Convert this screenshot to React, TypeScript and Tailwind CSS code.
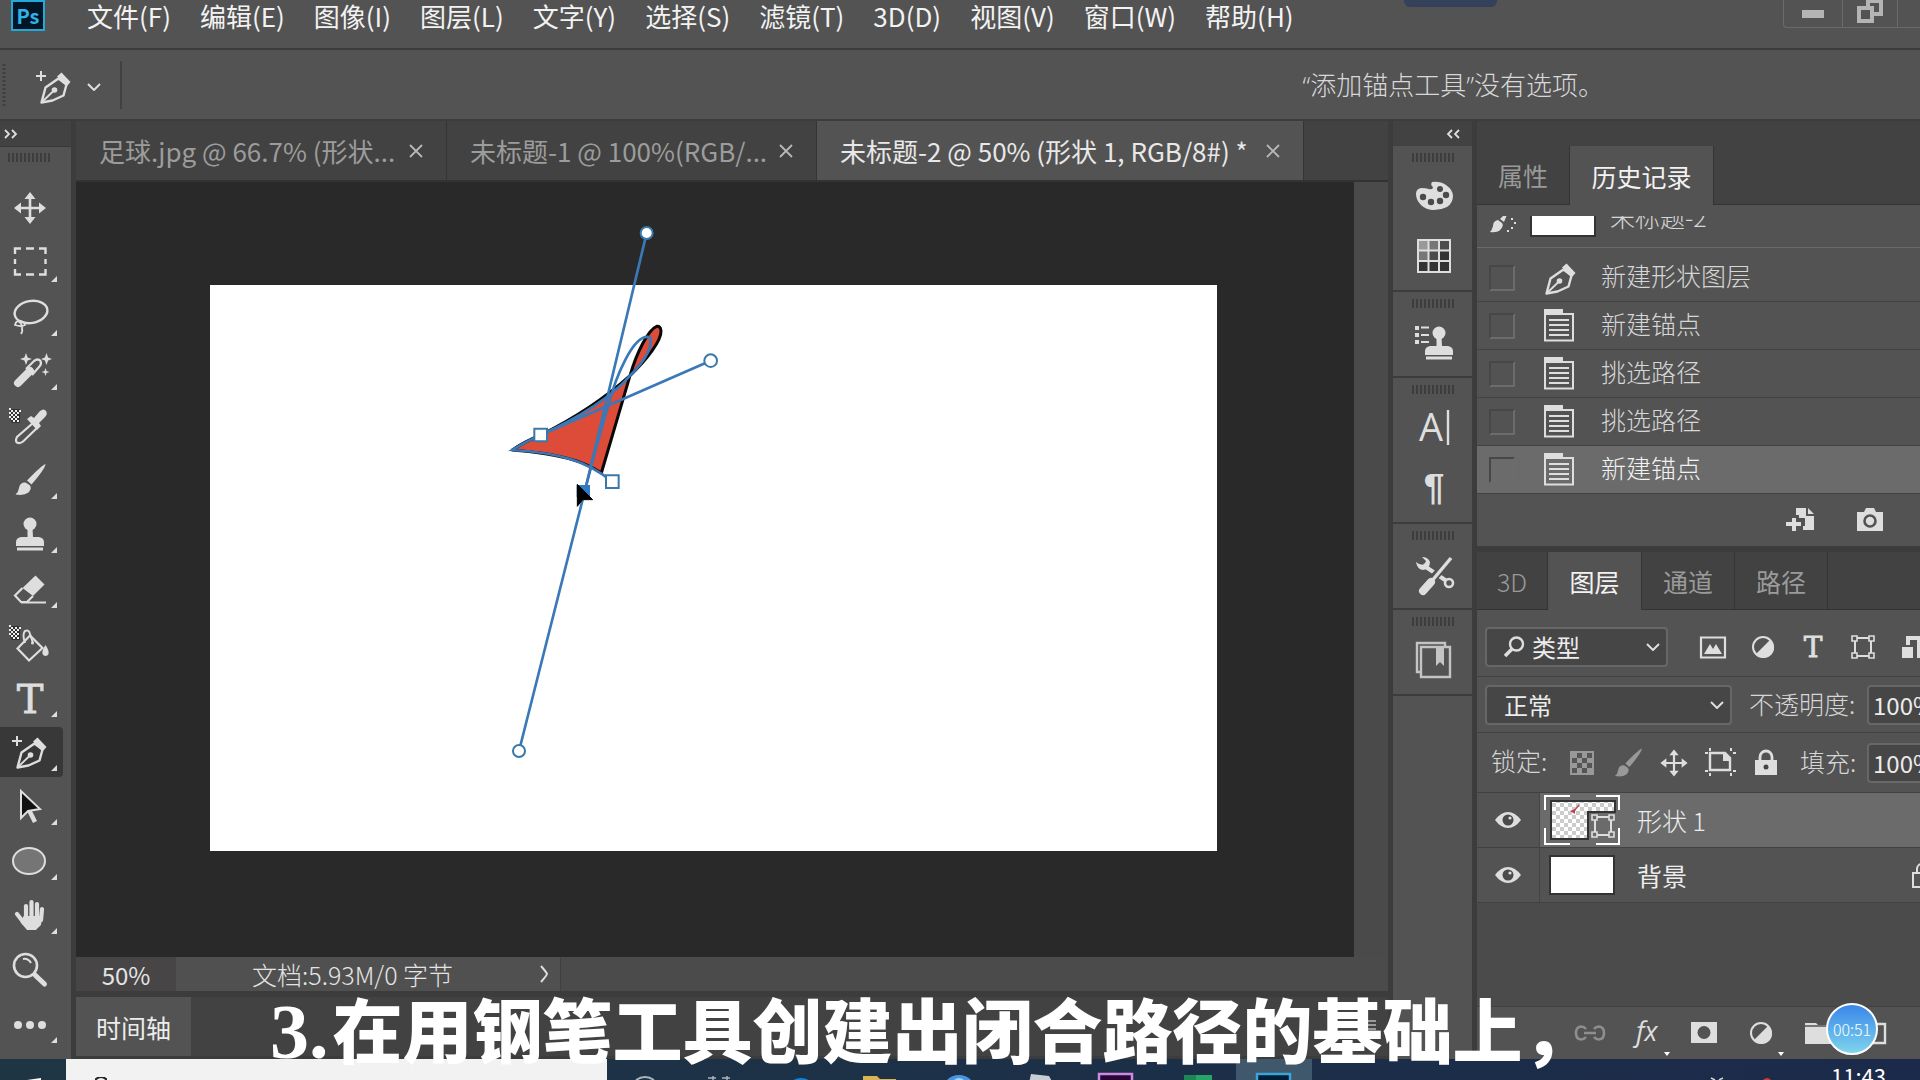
import type { ReactNode } from 'react';

const MENUS = ['文件(F)', '编辑(E)', '图像(I)', '图层(L)', '文字(Y)', '选择(S)', '滤镜(T)', '3D(D)', '视图(V)', '窗口(W)', '帮助(H)'];

const LIGHT = '#dedede';

function Chevron() {
    return (
        <svg viewBox="0 0 14 8" className="w-3.5 h-2" fill="none" stroke={LIGHT} strokeWidth="2">
            <path d="M1 1l6 6 6-6" />
        </svg>
    );
}

function Grip() {
    return (
        <svg viewBox="0 0 42 9" className="w-[42px] h-[9px] shrink-0" stroke="#3d3d3d" strokeWidth="2">
            <path d="M1 0v9M5 0v9M9 0v9M13 0v9M17 0v9M21 0v9M25 0v9M29 0v9M33 0v9M37 0v9M41 0v9" />
        </svg>
    );
}

function DoubleChevron({ flip }: { flip?: boolean }) {
    return (
        <svg viewBox="0 0 14 10" className={flip ? 'w-3.5 h-2.5 rotate-180' : 'w-3.5 h-2.5'} fill="none" stroke={LIGHT} strokeWidth="1.8">
            <path d="M1 1l4 4-4 4M8 1l4 4-4 4" />
        </svg>
    );
}

// All drawings below are centred on 0,0

function Nib() {
    return (
        <g>
            <path d="M-12.5 15.5L-8.5 .5 4.5-8.5 12.5-2.5 9.5 8.5-1.5 13.5Z" fill="none" stroke={LIGHT} strokeWidth="2.4" strokeLinejoin="round" />
            <path d="M3-10.5L7.5-14.5 16.5-5 12.5-.5Z" fill={LIGHT} />
            <circle cx=".5" cy="3" r="2.8" fill={LIGHT} />
            <path d="M.5 3L-12 15" stroke={LIGHT} strokeWidth="1.8" />
        </g>
    );
}

function PenPlus() {
    return (
        <g>
            <path d="M-13-16v10M-18-11h10" stroke={LIGHT} strokeWidth="2" />
            <Nib />
        </g>
    );
}

function MoveCross() {
    return (
        <g fill={LIGHT}>
            <path d="M0-10V10M-10 0H10" stroke={LIGHT} strokeWidth="2.6" />
            <path d="M0-16l5.5 7h-11ZM0 16l5.5-7h-11ZM-16 0l7-5.5v11ZM16 0l-7-5.5v11Z" />
        </g>
    );
}

function Stamp() {
    return (
        <g fill={LIGHT}>
            <circle cx="0" cy="-10" r="6.5" />
            <path d="M-2.5-6h5l.5 9h6q5 1 5 5v4h-28v-4q0-4 5-5h6.5Z" />
            <path d="M-13 13.5h26v3h-26Z" />
        </g>
    );
}

function BrushShape({ color = LIGHT }: { color?: string }) {
    return (
        <g fill={color}>
            <path d="M15.5-16Q12-15-3 .5L1.5 4.5Q15-11 15.5-16Z" />
            <path d="M-4.5 2.5Q-10 2-11 8-11.5 12-14.5 14.5-6 16-1.5 12.5 2.5 8-.5 5Z" />
        </g>
    );
}

function Checker() {
    return (
        <g stroke="none">
            <path d="M-20-17h10v14h-8l-2-4Z" fill="#333" />
            <path d="M-19-16h2v2h-2zM-15-16h2v2h-2zM-17-14h2v2h-2zM-13-14h2v2h-2zM-19-12h2v2h-2zM-15-12h2v2h-2zM-17-10h2v2h-2zM-13-10h2v2h-2zM-19-8h2v2h-2zM-15-8h2v2h-2zM-17-6h2v2h-2zM-13-6h2v2h-2zM-21-14h2v2h-2zM-21-10h2v2h-2zM-21-18h2v2h-2zM-11-16h2v2h-2z" fill="#eee" />
        </g>
    );
}

function Bounds() {
    return (
        <g fill="none" stroke={LIGHT} strokeWidth="2">
            <path d="M-8-6V6M8-6V6M-6-9H6M-6 9H6" />
            <path d="M-11-11h5v5h-5ZM6-11h5v5h-5ZM-11 6h5v5h-5ZM6 6h5v5h-5Z" strokeWidth="1.6" />
        </g>
    );
}

function HalfCircle() {
    return (
        <g>
            <circle r="10" fill="none" stroke={LIGHT} strokeWidth="2" />
            <path d="M7-7A10 10 0 1 1-7 7Z" fill={LIGHT} />
        </g>
    );
}

function SlabT({ size }: { size: number }) {
    return (
        <text x="0" y={size * 0.37} fontSize={size} textAnchor="middle" fill={LIGHT} stroke={LIGHT} strokeWidth=".8" fontFamily="DejaVu Serif, serif">T</text>
    );
}

const TOOLS: { name: string; art: ReactNode; more?: boolean; active?: boolean }[] = [
    { name: '移动工具', art: <MoveCross /> },
    {
        name: '矩形选框工具',
        more: true,
        art: <path d="M-15-9v-5.500h6M-4-14.5h8M9-14.5h6.500V-9M15.500-4v5M15.500 6v5.500H9M4 11.500h-8M-9 11.500h-6V6M-15 1v-5" fill="none" stroke={LIGHT} strokeWidth="2.4" />,
    },
    {
        name: '套索工具',
        more: true,
        art: (
            <g fill="none" stroke={LIGHT} strokeWidth="2.4">
                <ellipse cx="1" cy="-5" rx="16.5" ry="11" transform="rotate(-10 1 -5)" />
                <path d="M-15 8q1-5 6-4 4 1 4 4-4 2-10 0ZM-12 4q5 3 4 8 1 2-1 5" strokeWidth="1.8" />
            </g>
        ),
    },
    {
        name: '魔棒工具',
        more: true,
        art: (
            <g fill={LIGHT}>
                <path d="M-12 12L0 0" stroke={LIGHT} strokeWidth="8" strokeLinecap="round" />
                <path d="M-4-2L4-10Q8-13 10.5-10 12-7 9-4L2 4" fill="none" stroke={LIGHT} strokeWidth="2.2" />
                <path d="M-4-18l1.6 4.4L2-12-2.400-10.400-4-6-5.600-10.400-10-12-5.600-13.600ZM16.500-18l1.600 4.400L22-12l-3.900 1.600L16.500-6l-1.600-4.400L11-12l3.900-1.600ZM15.500-3l1 3 3 1-3 1-1 3-1-3-3-1 3-1Z" />
            </g>
        ),
    },
    {
        name: '吸管工具',
        art: (
            <g>
                <Checker />
                <path d="M3-3L-13 11q-2 4 0 5.500 3 1.500 6-1L7 2" fill="none" stroke={LIGHT} strokeWidth="2.2" />
                <path d="M-3-7l4-3 3 2 6-7q4-3 6 0 2 3-1 6l-6 6 2 3-4 4Z" fill={LIGHT} />
            </g>
        ),
    },
    { name: '画笔工具', more: true, art: <BrushShape /> },
    { name: '仿制图章工具', more: true, art: <Stamp /> },
    {
        name: '橡皮擦工具',
        more: true,
        art: (
            <g>
                <path d="M5.5-13.5L14.5-4.5 3 7-7.5-1Z" fill={LIGHT} />
                <path d="M-7.5-1L-15 6.5-9 13H-3L3 7M-9 13.5H16" fill="none" stroke={LIGHT} strokeWidth="2.2" />
            </g>
        ),
    },
    {
        name: '油漆桶工具',
        art: (
            <g fill="none" stroke={LIGHT} strokeWidth="2.2">
                <Checker />
                <path d="M0-7.5L12.5 5-1 17.5-12.5 5.5Z" />
                <path d="M-5 0q-3-9 0-12 4-2 5 3l3 9" strokeWidth="2" />
                <circle cx="2.5" cy="0" r="1.5" fill={LIGHT} stroke="none" />
                <path d="M15.5 2q4 6 3 9-1 2-3 2t-3-2q-1-3 3-9Z" fill={LIGHT} stroke="none" />
            </g>
        ),
    },
    { name: '横排文字工具', more: true, art: <SlabT size={40} /> },
    { name: '添加锚点工具', more: true, active: true, art: <PenPlus /> },
    {
        name: '路径选择工具',
        more: true,
        art: (
            <g stroke={LIGHT}>
                <path d="M-1 4L5 16" strokeWidth="4.5" />
                <path d="M-9-15V12L-2 5l12-2Z" fill="#111" strokeWidth="2" />
            </g>
        ),
    },
    { name: '椭圆工具', more: true, art: <ellipse cx="-1" cy="0" rx="16" ry="13" fill="#757575" stroke={LIGHT} strokeWidth="2" /> },
    {
        name: '抓手工具',
        more: true,
        art: (
            <g stroke={LIGHT} strokeWidth="4.2" strokeLinecap="round" fill={LIGHT}>
                <path d="M-4-9V4M1.5-13V4M7-11V4M12-6L11 5M-13-1L-6 8" />
                <path d="M-5 3H10L9 9 5 13H-2L-7 7Z" />
            </g>
        ),
    },
    {
        name: '缩放工具',
        art: (
            <g fill="none" stroke={LIGHT}>
                <circle cx="-4.5" cy="-3.5" r="11.5" strokeWidth="2.6" />
                <path d="M-7-10q5-1 8 4" strokeWidth="2" />
                <path d="M5 6L14.5 15" strokeWidth="5" strokeLinecap="round" />
            </g>
        ),
    },
    {
        name: '编辑工具栏',
        more: true,
        art: (
            <g fill={LIGHT}>
                <circle cx="-12" cy="1" r="4" />
                <circle cx="0" cy="1" r="4" />
                <circle cx="12" cy="1" r="4" />
            </g>
        ),
    },
];

function ToolBar() {
    return (
        <aside className="w-[71px] shrink-0 flex flex-col">
            <div className="h-[25px] shrink-0 bg-[#424242] flex items-center px-1">
                <DoubleChevron />
            </div>
            <div className="flex-1 flex flex-col bg-[#535353] pb-2 border-t border-[#383838]">
                <div className="h-[34px] shrink-0 px-2 pt-1.5">
                    <Grip />
                </div>
                {TOOLS.map((tool) => (
                    <button key={tool.name} type="button" aria-label={tool.name} className="flex-1 min-h-0 w-[63px] flex items-center">
                        <span className={`w-[63px] h-[50px] flex items-center ${tool.active ? 'rounded-r-sm bg-[#383838]' : ''}`}>
                            <svg viewBox="-30 -25 60 50" className="w-[60px] h-[50px]">
                                {tool.art}
                                {tool.more && <path d="M27 13V19H21Z" fill={LIGHT} />}
                            </svg>
                        </span>
                    </button>
                ))}
            </div>
        </aside>
    );
}

function DocTab({ title, size, active }: { title: string; size: string; active?: boolean }) {
    return (
        <div className={`${size} shrink-0 h-[59px] pl-[23px] pr-[23px] flex items-center justify-between border-r border-[#343434] ${active ? 'bg-[#535353] text-[#e8e8e8]' : 'text-[#9c9c9c]'}`}>
            <button type="button" className="text-[26px] leading-8 whitespace-nowrap">{title}</button>
            <button type="button" aria-label="关闭">
                <svg viewBox="0 0 14 14" className="w-3.5 h-3.5" stroke="#b8b8b8" strokeWidth="1.8">
                    <path d="M1 1l12 12M13 1L1 13" />
                </svg>
            </button>
        </div>
    );
}

function Artboard() {
    return (
        <div className="w-[1007px] h-[566px] shrink-0 bg-white">
            <svg viewBox="0 0 1007 566" className="w-full h-full overflow-visible">
                <g transform="translate(270 -76) scale(.33333)" fill="none">
                    <path
                        d="M97 723Q130 700 182 678C290 625 370 572 450 500C500 452 545 395 543 365Q541 350 530 352C505 362 470 430 450 500L364 792C310 755 240 735 97 723Z"
                        fill="#dc4c38"
                        stroke="#080808"
                        strokeWidth="9"
                        strokeLinejoin="round"
                    />
                    <g stroke="#3a78b8" strokeWidth="8">
                        <path d="M397 818C320 755 230 730 97 723Q130 702 182 678C300 625 400 560 450 500C490 460 520 420 510 385C460 370 405 510 385 590Q360 670 316 840" />
                        <path d="M500 72L316 840 117 1626M182 678L692 455" />
                    </g>
                    <g fill="#fff" stroke="#3a78a8" strokeWidth="6">
                        <circle cx="500" cy="72" r="18" />
                        <circle cx="692" cy="455" r="19" />
                        <circle cx="117" cy="1626" r="18" />
                        <path d="M163 659h38v38h-38ZM378 799h38v38h-38Z" />
                    </g>
                    <path d="M290 828h40v36h-40Z" fill="#2f7ac4" />
                    <path d="M292 826V892L308 872 338 872Z" fill="#000" stroke="#000" strokeWidth="3" />
                </g>
            </svg>
        </div>
    );
}

function DocumentArea() {
    return (
        <main className="flex-1 min-w-0 flex flex-col">
            <div className="h-[61px] shrink-0 flex bg-[#424242] border-b-2 border-[#333]">
                <DocTab title="足球.jpg @ 66.7% (形状..." size="w-[371px]" />
                <DocTab title="未标题-1 @ 100%(RGB/..." size="w-[370px]" />
                <DocTab title="未标题-2 @ 50% (形状 1, RGB/8#) *" size="w-[487px]" active />
            </div>
            <div className="flex-1 min-h-0 flex">
                <div className="flex-1 min-w-0 pr-1 pb-[3px] bg-[#292929] flex items-center justify-center">
                    <Artboard />
                </div>
                <div className="w-[34px] shrink-0 bg-[#4a4a4a]" />
            </div>
            <div className="h-[34px] shrink-0 flex bg-[#4b4b4b] text-[#e4e4e4] text-[25px] leading-8">
                <label className="w-[100px] flex bg-[#474546]">
                    <span className="sr-only">缩放比例</span>
                    <input defaultValue="50%" className="w-full h-full text-2xl leading-8 text-center bg-transparent outline-none" />
                </label>
                <div className="w-[385px] pl-[76px] pr-3 flex items-center justify-between bg-[#505050] border-r border-[#404040]">
                    <span className="font-light">文档:5.93M/0 字节</span>
                    <svg viewBox="0 0 8 18" className="w-2 h-[18px]" fill="none" stroke={LIGHT} strokeWidth="2">
                        <path d="M1 1q6 7 6 8t-6 8" />
                    </svg>
                </div>
            </div>
            <div className="mt-1.5 mb-[3px] h-[59px] shrink-0 flex bg-[#424242]">
                <button type="button" className="w-[115px] shrink-0 bg-[#535353] text-[#ececec] text-[25px] leading-8">时间轴</button>
                <div className="flex-1 flex items-center justify-end pr-3">
                    <svg viewBox="0 0 14 16" className="w-3.5 h-4" stroke="#9a9a9a" strokeWidth="2">
                        <path d="M0 2h14M0 6h14M0 10h14M0 14h14" />
                    </svg>
                </div>
            </div>
        </main>
    );
}

function DockIcon({ label, children }: { label: string; children: ReactNode }) {
    return (
        <button type="button" aria-label={label} className="h-[60px] flex items-center justify-center">
            <svg viewBox="-26 -25 50 50" className="w-[50px] h-[50px] overflow-visible">
                {children}
            </svg>
        </button>
    );
}

function DockSection({ children }: { children: ReactNode }) {
    return (
        <div className="pt-[7px] pb-1 flex flex-col items-center border-b-2 border-[#3c3c3c]">
            <Grip />
            <div className="mt-1 flex flex-col">{children}</div>
        </div>
    );
}

function Dock() {
    return (
        <aside className="w-[79px] shrink-0 flex flex-col">
            <div className="h-[25px] shrink-0 flex items-center justify-end pr-3 bg-[#424242]">
                <DoubleChevron flip />
            </div>
            <div className="flex-1 bg-[#535353]">
                <DockSection>
                    <DockIcon label="颜色">
                        <path d="M-2-14Q6-15 12-11 19-6 19 0 19 7 13 11 7 14 0 14-8 14-13 9-18 4-18-2-18-7-13-8-8-8-5-7-1-6-1-9-4-11-2-14Z" fill={LIGHT} />
                        <g fill="#4a4a4a">
                            <circle cx="-11" cy="1" r="3.2" />
                            <circle cx="-3" cy="6" r="3.2" />
                            <circle cx="6" cy="5" r="3.2" />
                            <circle cx="12" cy="-1" r="3.2" />
                            <circle cx="6" cy="-7" r="3" />
                        </g>
                    </DockIcon>
                    <DockIcon label="色板">
                        <path d="M-17-17H17V17H-17Z" fill={LIGHT} />
                        <path d="M-15-15h8.500v8.500H-15Z" fill="#999" />
                        <path d="M-4.500-15h8.500v8.500h-8.500ZM-15-4.500h8.500V4H-15Z" fill="#777" />
                        <path d="M6-15h9v8.500H6ZM-4.500-4.500H4V4h-8.500Z" fill="#4c4c4c" />
                        <path d="M6-4.500h9V4H6ZM-15 6h8.500v9H-15ZM-4.500 6H4v9h-8.500ZM6 6h9v9H6Z" fill="#333" />
                    </DockIcon>
                </DockSection>
                <DockSection>
                    <DockIcon label="仿制源">
                        <g transform="translate(5 1)">
                            <Stamp />
                        </g>
                        <path d="M-19-16h4v4h-4ZM-19-9h4v4h-4ZM-19-2h4v4h-4Z" fill={LIGHT} />
                        <path d="M-13-14.500h8M-13-7h8M-13 0h8" stroke={LIGHT} strokeWidth="2" />
                    </DockIcon>
                </DockSection>
                <DockSection>
                    <DockIcon label="字符">
                        <text x="-15" y="13" fontSize="38" fill={LIGHT} fontFamily="Open Sans, sans-serif">A</text>
                        <path d="M14-18V17" stroke={LIGHT} strokeWidth="2.4" />
                    </DockIcon>
                    <DockIcon label="段落">
                        <text x="0" y="12" fontSize="37" fontWeight="bold" textAnchor="middle" fill={LIGHT} fontFamily="Liberation Sans, sans-serif">¶</text>
                    </DockIcon>
                </DockSection>
                <DockSection>
                    <DockIcon label="工具预设">
                        <path d="M-11-9L14 8" stroke={LIGHT} strokeWidth="4" />
                        <circle cx="15" cy="9" r="4" fill="#535353" stroke={LIGHT} strokeWidth="2.6" />
                        <path d="M-18-12q1 7 7 8 7-1 7-8-2-5-8-5l4 4-2 4-5-1Z" fill={LIGHT} />
                        <path d="M-8 12L14-12" stroke="#535353" strokeWidth="8" />
                        <path d="M-11 17L-3 8" stroke={LIGHT} strokeWidth="8" strokeLinecap="round" />
                        <path d="M-3 8L17-16" stroke={LIGHT} strokeWidth="3.4" />
                    </DockIcon>
                </DockSection>
                <DockSection>
                    <DockIcon label="库">
                        <g fill="none" stroke="#c4c4c4" strokeWidth="2.4">
                            <path d="M-13 12h-4v-29h28v4" />
                            <path d="M-13-13H16V17H-13Z" />
                        </g>
                        <path d="M2-13h8V6L6 2 2 6Z" fill="#c4c4c4" />
                    </DockIcon>
                </DockSection>
            </div>
        </aside>
    );
}

function PageIcon() {
    return (
        <svg viewBox="0 0 30 33" className="w-[30px] h-[33px]">
            <path d="M0 0h19v5H0Z" fill={LIGHT} />
            <path d="M1 5H29V31.500H1ZM5 11h20M5 16h20M5 21h20M5 26h20" fill="none" stroke={LIGHT} strokeWidth="2" />
        </svg>
    );
}

function PenIcon() {
    return (
        <svg viewBox="-15 -17 34 34" className="w-[34px] h-[34px] ml-1">
            <Nib />
        </svg>
    );
}

const HISTORY = [
    { label: '新建形状图层', pen: true },
    { label: '新建锚点' },
    { label: '挑选路径' },
    { label: '挑选路径' },
    { label: '新建锚点', current: true },
];

function HistoryPanel() {
    return (
        <section className="shrink-0 bg-[#535353] mb-1.5">
            <div role="tablist" className="h-[59px] flex bg-[#424242] text-[25px] leading-8">
                <button role="tab" className="w-[93px] text-[#9a9a9a] border-r border-b border-[#343434]">属性</button>
                <button role="tab" aria-selected="true" className="w-[143px] bg-[#535353] text-[#f2f2f2]">历史记录</button>
                <div className="flex-1 border-l border-b border-[#343434]" />
            </div>
            <div className="h-[49px] pt-[11px] flex flex-col">
                {/* source snapshot, scrolled half out of view */}
                <div className="h-8 overflow-hidden flex items-end border-b border-[#6a6a6a]">
                    <div className="h-[58px] shrink-0 flex items-center">
                        <svg viewBox="0 0 32 32" className="w-8 h-8 ml-2" fill={LIGHT}>
                            <path d="M1 11h12v3H1ZM24 8L15 17l4 3Z" />
                            <path d="M13 18q-5 1-5 6-1 4-3 6 8 1 11-3 3-4 1-6Z" />
                            <path d="M26 16h2v2h-2ZM29 20h2v2h-2ZM26 25h2v2h-2ZM22 28h2v2h-2Z" />
                        </svg>
                        <div className="w-[66px] h-[38px] ml-[13px] bg-white border-2 border-[#333]" />
                        <span className="ml-[14px] pb-1 text-[25px] leading-8 font-light text-[#d6d6d6]">未标题-2</span>
                    </div>
                </div>
            </div>
            <ul>
                {HISTORY.map((step, i) => (
                    <li
                        key={i}
                        className={`h-12 border-b border-[#424242] ${step.current ? 'bg-[#6b6b6b] text-[#f2f2f2]' : 'text-[#d6d6d6]'}`}
                    >
                        <label className="h-full flex items-center">
                            <input
                                type="checkbox"
                                className="appearance-none ml-3 w-[26px] h-[26px] border-2 border-t-[#474747] border-l-[#474747] border-r-[#6c6c6c] border-b-[#6c6c6c]"
                            />
                            <span className="w-[60px] ml-[14px] flex justify-center">{step.pen ? <PenIcon /> : <PageIcon />}</span>
                            <span className="ml-3 pb-1.5 text-[25px] leading-8 font-light">{step.label}</span>
                        </label>
                    </li>
                ))}
            </ul>
            <div className="h-[52px] flex items-center pl-[309px] gap-[42px]">
                <button type="button" aria-label="从当前状态创建新文档">
                    <svg viewBox="0 0 28 24" className="w-7 h-6" fill={LIGHT}>
                        <path d="M10 0h10v8h8v14H17v-4h2v-8h-6V7h-3ZM22 0l6 6h-6Z" />
                        <path d="M6 10h4v4h5v4h-5v5H6v-5H0v-4h6Z" />
                    </svg>
                </button>
                <button type="button" aria-label="创建新快照">
                    <svg viewBox="0 0 28 24" className="w-7 h-6">
                        <path d="M1 4h7l2-4h8l2 4h7v19H1Z" fill={LIGHT} />
                        <circle cx="14" cy="13" r="5.5" fill="none" stroke="#535353" strokeWidth="2.6" />
                    </svg>
                </button>
            </div>
        </section>
    );
}

function SlotIcon({ label, children }: { label: string; children: ReactNode }) {
    return (
        <button type="button" aria-label={label} className="w-[50px] shrink-0 flex justify-center">
            <svg viewBox="-16 -16 32 32" className="w-8 h-8 overflow-visible">
                {children}
            </svg>
        </button>
    );
}

function LockIcon({ label, children }: { label: string; children: ReactNode }) {
    return (
        <button type="button" aria-label={label} className="w-[46px] shrink-0 flex justify-center">
            <svg viewBox="-16 -16 32 32" className="w-8 h-8">
                {children}
            </svg>
        </button>
    );
}

function FootIcon({ label, children }: { label: string; children: ReactNode }) {
    return (
        <button type="button" aria-label={label} className="w-[57px] shrink-0 flex justify-center">
            <svg viewBox="-28 -25 56 50" className="w-14 h-[50px]">
                {children}
            </svg>
        </button>
    );
}

function EyeButton() {
    return (
        <button type="button" aria-label="指示图层可见性" className="w-[63px] shrink-0 h-full flex items-center justify-center bg-[#535353] border-r border-[#444]">
            <svg viewBox="0 0 26 18" className="w-[26px] h-[18px]">
                <path d="M0 9Q6 1 13 1t13 8q-6 8-13 8T0 9Z" fill={LIGHT} />
                <circle cx="13" cy="9" r="5.5" fill="#4a4a4a" />
                <circle cx="15" cy="7" r="1.6" fill={LIGHT} />
            </svg>
        </button>
    );
}

function LayerThumb() {
    return (
        <svg viewBox="0 0 76 50" className="w-[76px] h-[50px] shrink-0">
            <defs>
                <pattern id="chk" width="8" height="8" patternUnits="userSpaceOnUse">
                    <path d="M0 0h8v8H0Z" fill="#fff" />
                    <path d="M0 0h4v4H0ZM4 4h4v4H4Z" fill="#ccc" />
                </pattern>
            </defs>
            <path d="M7 6H71V17H44V44H7Z" fill="url(#chk)" stroke="#333" strokeWidth="2" />
            <path d="M30 16l5-6" fill="none" stroke="#c0404f" strokeWidth="1.2" />
            <path d="M26 16l5-2v5Z" fill="#c0404f" />
            <g transform="translate(59 31)">
                <Bounds />
            </g>
            <path d="M1 15V1H26M52 1H75V15M75 33V49H52M26 49H1V33" fill="none" stroke="#fff" strokeWidth="2" />
        </svg>
    );
}

const FIELD = 'h-10 rounded-sm border-2 border-[#676767] bg-[#464646] text-[#ececec] text-2xl leading-8 outline-none';

function LayersPanel() {
    return (
        <section className="flex-1 min-h-0 flex flex-col bg-[#4b4b4b]">
            <div role="tablist" className="h-[58px] shrink-0 flex bg-[#424242] text-[25px] leading-8 text-[#9a9a9a]">
                <button role="tab" className="w-[71px] font-light border-r border-b border-[#343434]">3D</button>
                <button role="tab" aria-selected="true" className="w-[93px] bg-[#535353] text-[#f2f2f2]">图层</button>
                <button role="tab" className="w-[94px] border-x border-b border-[#343434]">通道</button>
                <button role="tab" className="w-[93px] border-r border-b border-[#343434]">路径</button>
                <div className="flex-1 border-b border-[#343434]" />
            </div>

            <div className="h-[67px] pt-2 shrink-0 flex items-center bg-[#535353] border-b border-[#414141]">
                <label className="relative ml-2 mr-5 shrink-0">
                    <span className="sr-only">滤镜类型</span>
                    <select className={`${FIELD} w-[183px] pl-[45px] appearance-none`}>
                        <option>类型</option>
                    </select>
                    <svg viewBox="0 0 22 22" className="absolute left-[18px] top-[9px] w-[22px] h-[22px]" fill="none" stroke={LIGHT}>
                        <circle cx="13.5" cy="8" r="6.5" strokeWidth="2.4" />
                        <path d="M9 13L2 20" strokeWidth="3.5" />
                    </svg>
                    <span className="absolute right-2 top-4"><Chevron /></span>
                </label>
                <SlotIcon label="像素图层滤镜">
                    <path d="M-12-9.500H12V10.500H-12Z" fill="none" stroke={LIGHT} strokeWidth="2.2" />
                    <path d="M-9 7l6-10 3 5 3-5 6 10Z" fill={LIGHT} />
                </SlotIcon>
                <SlotIcon label="调整图层滤镜"><HalfCircle /></SlotIcon>
                <SlotIcon label="文字图层滤镜"><SlabT size={28} /></SlotIcon>
                <SlotIcon label="形状图层滤镜"><Bounds /></SlotIcon>
                <SlotIcon label="智能对象滤镜">
                    <path d="M-11 0H0V11H-11ZM-7-11H10V11H4V-7H-3V-2h-4Z" fill={LIGHT} />
                </SlotIcon>
            </div>

            <div className="h-14 shrink-0 flex items-center bg-[#535353] border-b border-[#414141]">
                <label className="relative ml-2 shrink-0">
                    <span className="sr-only">混合模式</span>
                    <select className={`${FIELD} w-[247px] pl-[17px] appearance-none`}>
                        <option>正常</option>
                    </select>
                    <span className="absolute right-2 top-4"><Chevron /></span>
                </label>
                <label className="flex items-center shrink-0 text-[25px] leading-8 text-[#d6d6d6] font-light">
                    <span className="w-[135px] pl-[17px] pb-1 whitespace-nowrap">不透明度:</span>
                    <input defaultValue="100%" className={`${FIELD} w-20 pl-1 font-normal`} />
                </label>
            </div>

            <div className="h-[60px] shrink-0 flex items-center bg-[#535353] border-b border-[#414141] text-[25px] leading-8 text-[#d6d6d6] font-light">
                <span className="w-[82px] pl-[14px] pb-1.5 shrink-0 whitespace-nowrap">锁定:</span>
                <LockIcon label="锁定透明像素">
                    <path d="M-12-12H12V12H-12Z" fill="#999" />
                    <path d="M-5-10h5v5h-5ZM5-10h5v5H5ZM-10-5h5v5h-5ZM0-5h5v5H0ZM-5 0h5v5h-5ZM5 0h5v5H5ZM-10 5h5v5h-5ZM0 5h5v5H0Z" fill="#555" />
                </LockIcon>
                <LockIcon label="锁定图像像素"><g transform="scale(.9)"><BrushShape color="#999" /></g></LockIcon>
                <LockIcon label="锁定位置"><g transform="scale(.85)"><MoveCross /></g></LockIcon>
                <LockIcon label="防止自动嵌套">
                    <path d="M-10-10H5L10-5V7H-10Z" fill="none" stroke={LIGHT} strokeWidth="2.4" />
                    <path d="M3-10h2l5 5v3H3Z" fill={LIGHT} />
                    <path d="M-15-10h3M-10-15v3M11-15v3M13-10h3M-15 8h3M-10 10v3M11 10v3M13 8h3" stroke={LIGHT} strokeWidth="2" />
                </LockIcon>
                <LockIcon label="锁定全部">
                    <path d="M-11-3H11V12H-11Z" fill={LIGHT} />
                    <path d="M-6-3V-6a6 6 0 0 1 12 0V-3" fill="none" stroke={LIGHT} strokeWidth="2.8" />
                    <circle cy="4" r="2.5" fill="#444" />
                </LockIcon>
                <label className="flex items-center shrink-0">
                    <span className="w-[78px] pl-[11px] pb-1 whitespace-nowrap">填充:</span>
                    <input defaultValue="100%" className={`${FIELD} w-20 pl-1 font-normal`} />
                </label>
            </div>

            <ul className="shrink-0 text-[25px] leading-8 text-[#ececec] font-light">
                <li className="h-[54px] flex items-center bg-[#6b6b6b]">
                    <EyeButton />
                    <span className="w-[97px] shrink-0 pl-1"><LayerThumb /></span>
                    <span>形状 1</span>
                </li>
                <li className="h-14 flex items-center bg-[#535353] border-y border-[#414141]">
                    <EyeButton />
                    <span className="w-[97px] shrink-0 pl-[9px]">
                        <span className="block w-[66px] h-[40px] bg-white border-2 border-[#333]" />
                    </span>
                    <span className="font-normal">背景</span>
                    <svg viewBox="0 0 20 26" className="w-5 h-[26px] ml-auto -mr-3 shrink-0" fill="none" stroke={LIGHT} strokeWidth="2">
                        <path d="M1 11H19V25H1ZM5 11V7a5 5 0 0 1 10 0v4" />
                    </svg>
                </li>
            </ul>

            <div className="flex-1" />

            <div className="h-[53px] shrink-0 flex items-center bg-[#535353] border-t border-[#414141] pl-[84px]">
                <FootIcon label="链接图层">
                    <g fill="none" stroke="#8e8e8e" strokeWidth="2.6">
                        <path d="M-4-4Q-6-6.500-9-6.500-14-6-14 0T-9 6.500Q-6 6.500-4 4M4-4Q6-6.500 9-6.500 14-6 14 0T9 6.500Q6 6.500 4 4M-6 0H6" />
                    </g>
                </FootIcon>
                <FootIcon label="添加图层样式">
                    <text x="-11" y="8" fontSize="27" fontStyle="italic" fill={LIGHT} fontFamily="Open Sans, sans-serif">fx</text>
                    <path d="M17 19h6l-3 4Z" fill="#fff" />
                </FootIcon>
                <FootIcon label="添加图层蒙版">
                    <path d="M-13-11H13V10H-13Z" fill={LIGHT} />
                    <circle cy="-.5" r="6.5" fill="#535353" />
                </FootIcon>
                <FootIcon label="创建新的填充或调整图层">
                    <HalfCircle />
                    <path d="M17 19h6l-3 4Z" fill="#fff" />
                </FootIcon>
                <FootIcon label="创建新组">
                    <path d="M-13-10H-2L0-8H14V11H-13Z" fill={LIGHT} />
                    <path d="M-13-7H14" stroke="#535353" strokeWidth="1.5" />
                </FootIcon>
                <FootIcon label="创建新图层">
                    <path d="M-14-9H10V10H-14Z" fill="none" stroke={LIGHT} strokeWidth="2.4" />
                </FootIcon>
            </div>
        </section>
    );
}

function TaskBar() {
    return (
        <footer className="h-[21px] shrink-0 flex overflow-hidden bg-gradient-to-r from-[#1e3644] to-[#1b2a4a]">
            <button type="button" aria-label="开始" className="w-[66px] shrink-0 flex items-end justify-end pr-[25px]">
                <svg viewBox="0 0 14 2" className="w-3.5 h-0.5"><path d="M0 2L14 0V2Z" fill="#fff" /></svg>
            </button>
            <label className="w-[541px] shrink-0 flex items-end bg-[#f2f2f2] pl-[29px]">
                <span className="sr-only">搜索</span>
                <svg viewBox="0 0 12 3" className="w-3 h-[3px] shrink-0"><path d="M0 3Q6-3 12 3" fill="none" stroke="#222" strokeWidth="2" /></svg>
                <input className="w-full h-full bg-transparent outline-none" />
            </label>
            <svg viewBox="607 0 705 21" className="w-[705px] h-[21px] shrink-0">
                <path d="M636 21Q645 15 654 21" fill="none" stroke="#a9b4bc" strokeWidth="2" />
                <path d="M713 17v4M708 19h8M727 17v4M722 19h8" stroke="#a9b4bc" strokeWidth="1.5" />
                <circle cx="801" cy="34" r="15" fill="#1283dc" />
                <path d="M863 17h14l3 3h16v4H863Z" fill="#d8b454" />
                <circle cx="959" cy="33" r="17" fill="#4a93e0" />
                <circle cx="959" cy="26" r="7" fill="#a9d2f4" />
                <path d="M1031 15l18 2 4 7h-24Z" fill="#c9ced2" />
                <path d="M1099 15h33v10h-33Z" fill="#2a0634" stroke="#c98be0" strokeWidth="2.5" />
                <path d="M1184 16h28v8h-28Z" fill="#27a567" />
                <path d="M1184 16h12v8h-12Z" fill="#1c8654" />
                <path d="M1236 0h76v21h-76Z" fill="#40586c" />
                <path d="M1257 15h33v10h-33Z" fill="#031e36" stroke="#3ba5d8" strokeWidth="2.5" />
            </svg>
            <div className="flex-1 flex items-end justify-end gap-[52px] pr-[34px]">
                <svg viewBox="0 0 70 3" className="w-[70px] h-[3px]">
                    <path d="M2 1l4 2M14 1l-4 2" stroke="#cfd6dc" strokeWidth="1.5" />
                    <path d="M54 3q4-4 8 0Z" fill="#d8343c" />
                </svg>
                <time className="h-[17px] text-[22px] leading-6 text-white">11:43</time>
            </div>
        </footer>
    );
}

export default function App() {
    return (
        <div className="relative h-screen overflow-hidden flex flex-col bg-[#3c3c3c] font-['Noto_Sans_CJK_SC','Noto_Sans',sans-serif]">
            <header className="h-[50px] shrink-0 flex bg-[#535353] border-b-2 border-[#3c3c3c]">
                <div className="w-[34px] h-[31px] ml-[11px] shrink-0 flex items-center justify-center bg-[#021527] border-2 border-[#22a9d8] text-[#2fb4e8] text-xl leading-5 font-bold">Ps</div>
                <nav className="ml-[42px] h-8 flex items-center gap-[29px] text-[#f2f2f2] text-[26px] leading-8">
                    {MENUS.map((menu) => (
                        <button key={menu} type="button" className="whitespace-nowrap">{menu}</button>
                    ))}
                </nav>
                <div className="ml-auto flex">
                    <div className="w-[93px] h-[7px] rounded-b-md bg-[#33415a] mr-[286px]" />
                    <div className="h-7 flex border-l border-b border-[#6a6a6a] rounded-bl-sm">
                        <button type="button" aria-label="最小化" className="w-[58px] flex items-center justify-center">
                            <svg viewBox="0 0 22 8" className="w-[22px] h-2"><path d="M0 0h22v8H0Z" fill="#b4b4b4" /></svg>
                        </button>
                        <button type="button" aria-label="还原" className="w-[56px] flex justify-center border-x border-[#6a6a6a]">
                            <svg viewBox="0 0 26 24" className="w-[26px] h-6" fill="none" stroke="#b4b4b4" strokeWidth="4">
                                <path d="M2 8H15V21H2ZM11 8V1H24V14H16" />
                            </svg>
                        </button>
                        <button type="button" aria-label="关闭窗口" className="w-[22px]" />
                    </div>
                </div>
            </header>

            <div className="h-[71px] shrink-0 flex items-center bg-[#535353] border-b-2 border-[#3c3c3c]">
                <svg viewBox="0 0 4 42" className="w-1 h-[42px] ml-0.5" stroke="#3f3f3f" strokeWidth="3">
                    <path d="M2 0V42" strokeDasharray="2 2" />
                </svg>
                <button type="button" aria-label="工具预设" className="flex items-center ml-[26px] pt-1 gap-[11px]">
                    <svg viewBox="-22 -18 44 36" className="w-11 h-9"><PenPlus /></svg>
                    <Chevron />
                </button>
                <div className="w-0.5 h-12 ml-[19px] bg-[#414141]" />
                <p className="ml-auto mr-[316px] text-[26px] leading-8 font-light text-[#d8d8d8] font-['Open_Sans','Noto_Sans_CJK_SC',sans-serif]">“添加锚点工具”没有选项。</p>
            </div>

            <div className="flex-1 min-h-0 flex">
                <ToolBar />
                <div className="w-[5px] shrink-0" />
                <DocumentArea />
                <div className="w-[5px] shrink-0" />
                <Dock />
                <div className="w-[5px] shrink-0" />
                <aside className="w-[443px] shrink-0 flex flex-col overflow-hidden">
                    <div className="h-[25px] shrink-0 bg-[#424242]" />
                    <HistoryPanel />
                    <LayersPanel />
                </aside>
            </div>

            <TaskBar />

            {/* recording timer bubble */}
            <div className="absolute right-[42px] bottom-[25px] w-[52px] h-[52px] rounded-full border-2 border-white bg-gradient-to-b from-[#3b86e8] to-[#7fd4ec] flex items-center justify-center text-white text-base leading-5 font-light">
                00:51
            </div>

            {/* subtitle */}
            <p className="absolute left-[270px] bottom-0 whitespace-nowrap text-white text-[70px] leading-[90px] font-black font-['Liberation_Serif','Noto_Sans_CJK_SC',serif]">
                <span className="mr-1 text-[78px] leading-[70px]">3.</span>在用钢笔工具创建出闭合路径的基础上，
            </p>
        </div>
    );
}
